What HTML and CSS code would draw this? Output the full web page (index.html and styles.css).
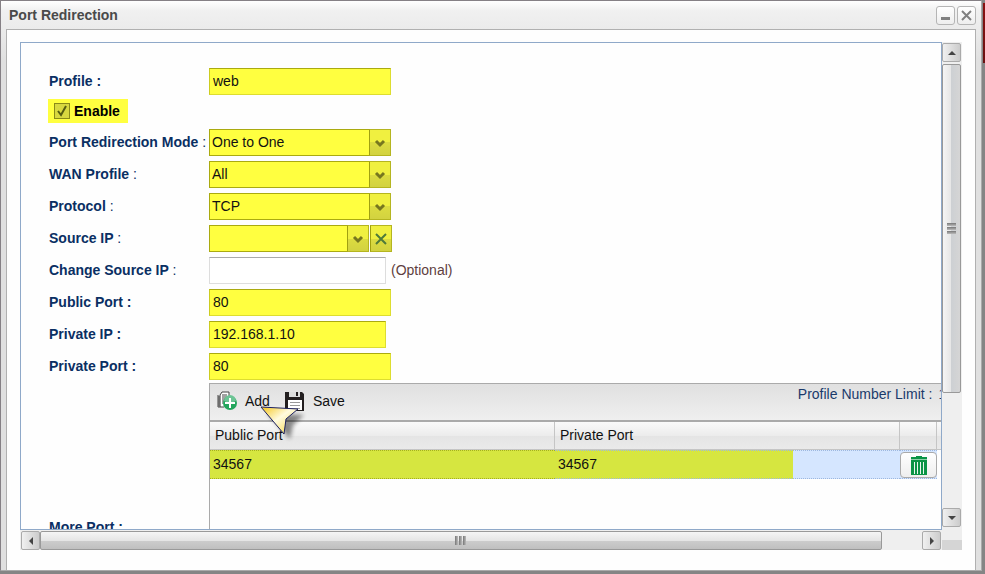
FILE: index.html
```
<!DOCTYPE html>
<html lang="en">
<head>
    <meta charset="UTF-8">
    <meta name="viewport" content="width=device-width, initial-scale=1.0">
    <title>Port Redirection</title>
    <link rel="stylesheet" href="styles.css">
</head>
<body>
    <div class="window">
        <div class="titlebar">
            <h1>Port Redirection</h1>
            <button type="button" class="tool" aria-label="Minimize">
                <svg width="17" height="17" viewBox="0 0 17 17"><path d="M4 10h9v3H4z" fill="#808080"/></svg>
            </button>
            <button type="button" class="tool" aria-label="Close">
                <svg width="17" height="17" viewBox="0 0 17 17"><path d="M4 4l9 9M13 4l-9 9" stroke="#808080" stroke-width="2"/></svg>
            </button>
        </div>
        <div class="window-body">
            <div class="scroller">
                <form class="form">
                    <div class="row">
                        <label class="name" for="profile">Profile :</label>
                        <input type="text" id="profile" class="field marked" value="web">
                    </div>
                    <div class="row">
                        <label class="enable"><input type="checkbox" checked>Enable</label>
                    </div>
                    <div class="row">
                        <label class="name" for="mode">Port Redirection Mode <span>:</span></label>
                        <div class="combo">
                            <select id="mode"><option>One to One</option></select>
                            <span class="trigger"><svg width="12" height="10" viewBox="0 0 12 10"><path d="M2 3l4 4 4-4" fill="none" stroke="#77771f" stroke-width="3"/></svg></span>
                        </div>
                    </div>
                    <div class="row">
                        <label class="name" for="wan">WAN Profile <span>:</span></label>
                        <div class="combo">
                            <select id="wan"><option>All</option></select>
                            <span class="trigger"><svg width="12" height="10" viewBox="0 0 12 10"><path d="M2 3l4 4 4-4" fill="none" stroke="#77771f" stroke-width="3"/></svg></span>
                        </div>
                    </div>
                    <div class="row">
                        <label class="name" for="protocol">Protocol <span>:</span></label>
                        <div class="combo">
                            <select id="protocol"><option>TCP</option></select>
                            <span class="trigger"><svg width="12" height="10" viewBox="0 0 12 10"><path d="M2 3l4 4 4-4" fill="none" stroke="#77771f" stroke-width="3"/></svg></span>
                        </div>
                    </div>
                    <div class="row">
                        <label class="name" for="source">Source IP <span>:</span></label>
                        <div class="combo clearable">
                            <select id="source"><option></option></select>
                            <span class="trigger"><svg width="12" height="10" viewBox="0 0 12 10"><path d="M2 3l4 4 4-4" fill="none" stroke="#77771f" stroke-width="3"/></svg></span>
                            <button type="button" class="trigger clear" aria-label="Clear"><svg width="12" height="12" viewBox="0 0 12 12"><path d="M1 1l10 10M11 1l-10 10" stroke="#4f7a3a" stroke-width="2"/></svg></button>
                        </div>
                    </div>
                    <div class="row">
                        <label class="name" for="change">Change Source IP <span>:</span></label>
                        <input type="text" id="change" class="field short">
                        <span class="hint">(Optional)</span>
                    </div>
                    <div class="row">
                        <label class="name" for="public">Public Port :</label>
                        <input type="text" id="public" class="field marked" value="80">
                    </div>
                    <div class="row">
                        <label class="name" for="private">Private IP :</label>
                        <input type="text" id="private" class="field marked short" value="192.168.1.10">
                    </div>
                    <div class="row">
                        <label class="name" for="pport">Private Port :</label>
                        <input type="text" id="pport" class="field marked" value="80">
                    </div>
                    <div class="row more">
                        <span class="name">More Port :</span>
                        <div class="grid">
                            <div class="toolbar">
                                <button type="button" class="action">
                                    <svg width="20" height="20" viewBox="0 0 20 20">
                                        <path d="M5 1h7v15H4V3z" fill="#fff"/>
                                        <path d="M12 6V1H5L3 4v12h4M1 4v12h2" fill="none" stroke="#444"/>
                                        <path d="M5 4h5M5 6h5M5 8h3M5 10h2M5 12h1M1 6h2M1 8h2M1 10h2M1 12h2M1 14h2" stroke="#444"/>
                                        <circle cx="13" cy="12" r="7" fill="#23a55c"/>
                                        <path d="M7 10a6 6 0 0 1 12 0q-6 3-12 0z" fill="#6cc494"/>
                                        <path d="M13 7v10M8 12h10" stroke="#fff" stroke-width="2"/>
                                    </svg>
                                    Add
                                </button>
                                <button type="button" class="action">
                                    <svg width="20" height="20" viewBox="0 0 20 20">
                                        <path d="M0 1h17l2 2v17H0z" fill="#231f20"/>
                                        <path d="M4 1h11v5H4z" fill="#ddd"/>
                                        <path d="M11 1h2v4h-2z" fill="#231f20"/>
                                        <path d="M3 9h14v10H3z" fill="#fff"/>
                                        <path d="M5 11.5h10M5 14.500h10M5 17.500h10" stroke="#999"/>
                                    </svg>
                                    Save
                                </button>
                                <span class="limit">Profile Number Limit :<span>16</span></span>
                            </div>
                            <table class="ports">
                                <thead>
                                    <tr><th>Public Port</th><th>Private Port</th><th class="tiny"></th><th class="rest"></th></tr>
                                </thead>
                                <tbody>
                                    <tr>
                                        <td class="picked">34567</td>
                                        <td class="picked-part">34567</td>
                                        <td class="tiny">
                                            <button type="button" class="delete" aria-label="Delete">
                                                <svg width="18" height="20" viewBox="0 0 18 20">
                                                    <path d="M1 1h5V0h6v1h5v2H1z" fill="#0a9446"/>
                                                    <path d="M1 3h16v1H1z" fill="#8fcfa9"/>
                                                    <path d="M1 4h16v15H1z" fill="#0a9446"/>
                                                    <path d="M4.500 6v12M7.500 6v12M10.500 6v12M13.500 6v12" stroke="#e8f6ee"/>
                                                </svg>
                                            </button>
                                        </td>
                                        <td class="rest"></td>
                                    </tr>
                                </tbody>
                            </table>
                            <svg class="pointer" width="52" height="42" viewBox="0 0 52 42">
                                <defs>
                                    <linearGradient id="gold" x1="0" y1="0" x2="1" y2="1">
                                        <stop offset="0" stop-color="#f5c518"/>
                                        <stop offset=".45" stop-color="#fffbe0"/>
                                        <stop offset="1" stop-color="#f7d42c"/>
                                    </linearGradient>
                                </defs>
                                <path class="shade" d="M7 7L44 9L33 19L30 33z"/>
                                <path d="M1 1L38 3L26 13L24 28z" fill="url(#gold)" stroke="#1d2160"/>
                            </svg>
                        </div>
                    </div>
                </form>
                <div class="vbar">
                    <button type="button" class="arrow" aria-label="Scroll up"><svg width="8" height="4" viewBox="0 0 8 4"><path d="M4 0l4 4H0z" fill="#444"/></svg></button>
                    <div class="thumb"><i></i><i></i><i></i></div>
                    <button type="button" class="arrow" aria-label="Scroll down"><svg width="8" height="4" viewBox="0 0 8 4"><path d="M0 0h8L4 4z" fill="#444"/></svg></button>
                </div>
                <div class="hbar">
                    <button type="button" class="arrow" aria-label="Scroll left"><svg width="4" height="8" viewBox="0 0 4 8"><path d="M4 0v8L0 4z" fill="#444"/></svg></button>
                    <div class="thumb"><i></i><i></i><i></i></div>
                    <button type="button" class="arrow" aria-label="Scroll right"><svg width="4" height="8" viewBox="0 0 4 8"><path d="M0 0l4 4-4 4z" fill="#444"/></svg></button>
                </div>
                <div class="corner"></div>
            </div>
        </div>
    </div>
</body>
</html>
```
FILE: styles.css
```
* {
    box-sizing: border-box;
}

body {
    margin: 0;
    height: 100vh;
    padding: 0 3px 3px 0;
    overflow: hidden;
    font-family: "Liberation Sans", Arial, sans-serif;
    font-size: 14px;
    line-height: 16px;
    color: #111;
    background: linear-gradient(#8a1010, #6a1010) right 3px / 2px 60px no-repeat #858585;
}

button, input, select {
    font: inherit;
    color: inherit;
    margin: 0;
}

/* window */
.window {
    display: flex;
    flex-direction: column;
    height: 100%;
    padding: 0 5px 0 5px;
    border: 1px solid #858085;
    border-right-color: #aaa;
    border-bottom-color: #aaa;
    background: linear-gradient(#fff, #f0f0f0 10px, #ebebeb 28px, #e0e0e0 60px);
}

.titlebar {
    display: flex;
    align-items: center;
    gap: 2px;
    height: 28px;
}

.titlebar h1 {
    flex: 1;
    margin: 0 0 0 3px;
    font-size: 14px;
    color: #4a4a4a;
}

.tool {
    width: 19px;
    height: 19px;
    padding: 0;
    border: 1px solid #b5b5b5;
    border-radius: 3px;
    background: linear-gradient(#fff, #eee);
}

.tool svg {
    display: block;
}

.window-body {
    flex: 1;
    min-height: 0;
    padding: 12px 13px 20px 13px;
    border: 1px solid #b0b0b0;
    border-bottom: 0;
    background: #fefefe;
}

.scroller {
    display: grid;
    grid-template-columns: minmax(0, 1fr) 20px;
    grid-template-rows: minmax(0, 1fr) 20px;
    height: 100%;
}

/* form */
.form {
    display: flex;
    flex-direction: column;
    gap: 5px;
    padding: 25px 0 0 28px;
    overflow: hidden;
    border: 1px solid #8fa9c9;
}

.row {
    display: flex;
    flex-shrink: 0;
    align-items: center;
}

.name {
    width: 160px;
    flex-shrink: 0;
    padding-bottom: 2px;
    font-weight: bold;
    color: #0a2f63;
}

.name span {
    font-weight: normal;
}

.field {
    width: 182px;
    height: 27px;
    padding: 0 3px 2px;
    border: 1px solid #ddd;
    border-top-color: #aaa;
    background: #fff;
}

.marked {
    border-color: #aaaa10 #dddd30 #dddd30 #cccc20;
    background: #ffff40;
}

.short {
    width: 177px;
}

.hint {
    margin-left: 5px;
    padding-bottom: 2px;
    color: #5f3f3f;
}

.enable {
    display: flex;
    align-items: center;
    gap: 4px;
    height: 24px;
    margin: -1px 0 1px -1px;
    padding: 0 8px 0 6px;
    font-weight: bold;
    color: #000;
    background: #ffff40;
}

.enable input {
    appearance: none;
    width: 16px;
    height: 16px;
    border: 1px solid #8a8a18;
    background: url("data:image/svg+xml,%3Csvg xmlns='http://www.w3.org/2000/svg' viewBox='0 0 14 14'%3E%3Cpath d='M3 7l3 4 5-9' fill='none' stroke='%23555c10' stroke-width='2'/%3E%3C/svg%3E") #d8d840;
}

.combo {
    display: flex;
    width: 182px;
    height: 27px;
}

.clearable {
    width: 183px;
}

.combo select {
    flex: 1;
    min-width: 0;
    padding: 0 3px 2px 2px;
    appearance: none;
    border: 1px solid #aaaa10;
    border-right: 0;
    border-radius: 0;
    background: #ffff40;
}

.trigger {
    display: flex;
    align-items: center;
    justify-content: center;
    width: 22px;
    padding: 0;
    border: 1px solid #b5b520;
    border-left-color: #a0a010;
    background: linear-gradient(#f0f040 50%, #dcdc40 50%, #d2d240);
}

.clear {
    margin-left: 1px;
}

/* ports grid */
.more {
    margin-top: -2px;
}

.grid {
    position: relative;
    flex: 1;
    min-width: 0;
    min-height: 290px;
    margin-right: -20px;
    border: 1px solid #aaa;
}

.toolbar {
    display: flex;
    align-items: center;
    gap: 15px;
    height: 38px;
    padding: 0 0 3px 7px;
    border-bottom: 2px solid #aaa;
    background: linear-gradient(#e0e0e0, #efefef);
}

.action {
    display: flex;
    align-items: center;
    gap: 8px;
    padding: 0;
    border: 0;
    background: none;
}

.limit {
    align-self: flex-start;
    margin: 2px 6px 0 auto;
    color: #1a3a6b;
}

.limit span {
    margin-left: 6px;
}

.ports {
    width: 100%;
    table-layout: fixed;
    border-collapse: separate;
    border-spacing: 0;
}

.ports th {
    height: 28px;
    padding: 0 5px 2px;
    font-weight: normal;
    text-align: left;
    border-right: 1px solid #c5c5c5;
    border-bottom: 1px solid #c5c5c5;
    background: linear-gradient(#fafafa, #ececec 50%, #e4e4e4 50%, #eaeaea);
}

.ports td {
    height: 29px;
    padding: 0 3px 1px;
    border: 1px dotted #9db8e0;
    border-width: 1px 0;
    background: #d5e6ff;
}

.ports .picked {
    border-color: #a5b020;
    background: #d6e640;
}

.ports .picked-part {
    background: linear-gradient(to right, #d6e640 69%, #d5e6ff 69%);
}

.ports .tiny {
    width: 37px;
    padding: 0;
}

.ports .rest {
    width: 23px;
}

.ports td.rest {
    border: 0;
    background: none;
}

.delete {
    display: flex;
    align-items: center;
    justify-content: center;
    width: 37px;
    height: 26px;
    padding: 2px 0 0;
    border: 1px solid #aaa;
    border-radius: 4px;
    background: linear-gradient(#fff, #eee);
}

.pointer {
    position: absolute;
    left: 50px;
    top: 22px;
}

.shade {
    fill: #000;
    opacity: .45;
    filter: blur(2px);
}

/* scroll bars */
.vbar, .hbar {
    display: flex;
    background: #efefef;
}

.vbar {
    flex-direction: column;
    gap: 2px;
    padding: 1px 1px 3px 0;
}

.hbar {
    padding: 1px 1px 0;
}

.arrow {
    display: flex;
    flex-shrink: 0;
    align-items: center;
    justify-content: center;
    width: 19px;
    height: 19px;
    padding: 0;
    border: 1px solid #aaa;
    border-radius: 2px;
    background: linear-gradient(to right, #f0f0f0, #ccc);
}

.arrow:last-child {
    margin: auto 0 0 auto;
}

.thumb {
    display: flex;
    align-items: center;
    justify-content: center;
    gap: 1px;
    border: 1px solid #999;
    border-radius: 2px;
}

.vbar .thumb {
    flex-direction: column;
    flex: 0 0 68%;
    background: linear-gradient(to right, #f5f5f5, #e5e5e5 50%, #cdd0d3 50%, #d5d5d5);
}

.hbar .thumb {
    flex: 0 0 91.5%;
    background: linear-gradient(#f5f5f5, #e5e5e5 50%, #cdcdcd 50%, #bfbfbf);
}

.hbar .arrow:last-child {
    margin-bottom: 0;
    margin-top: 0;
}

.thumb i {
    background: #777;
}

.vbar i {
    width: 9px;
    height: 3px;
    background: linear-gradient(#777, #bbb);
}

.hbar i {
    width: 3px;
    height: 9px;
    background: linear-gradient(to right, #777, #bbb);
}

.corner {
    background: linear-gradient(#eee 50%, #d5d5d5 50%);
}
```
